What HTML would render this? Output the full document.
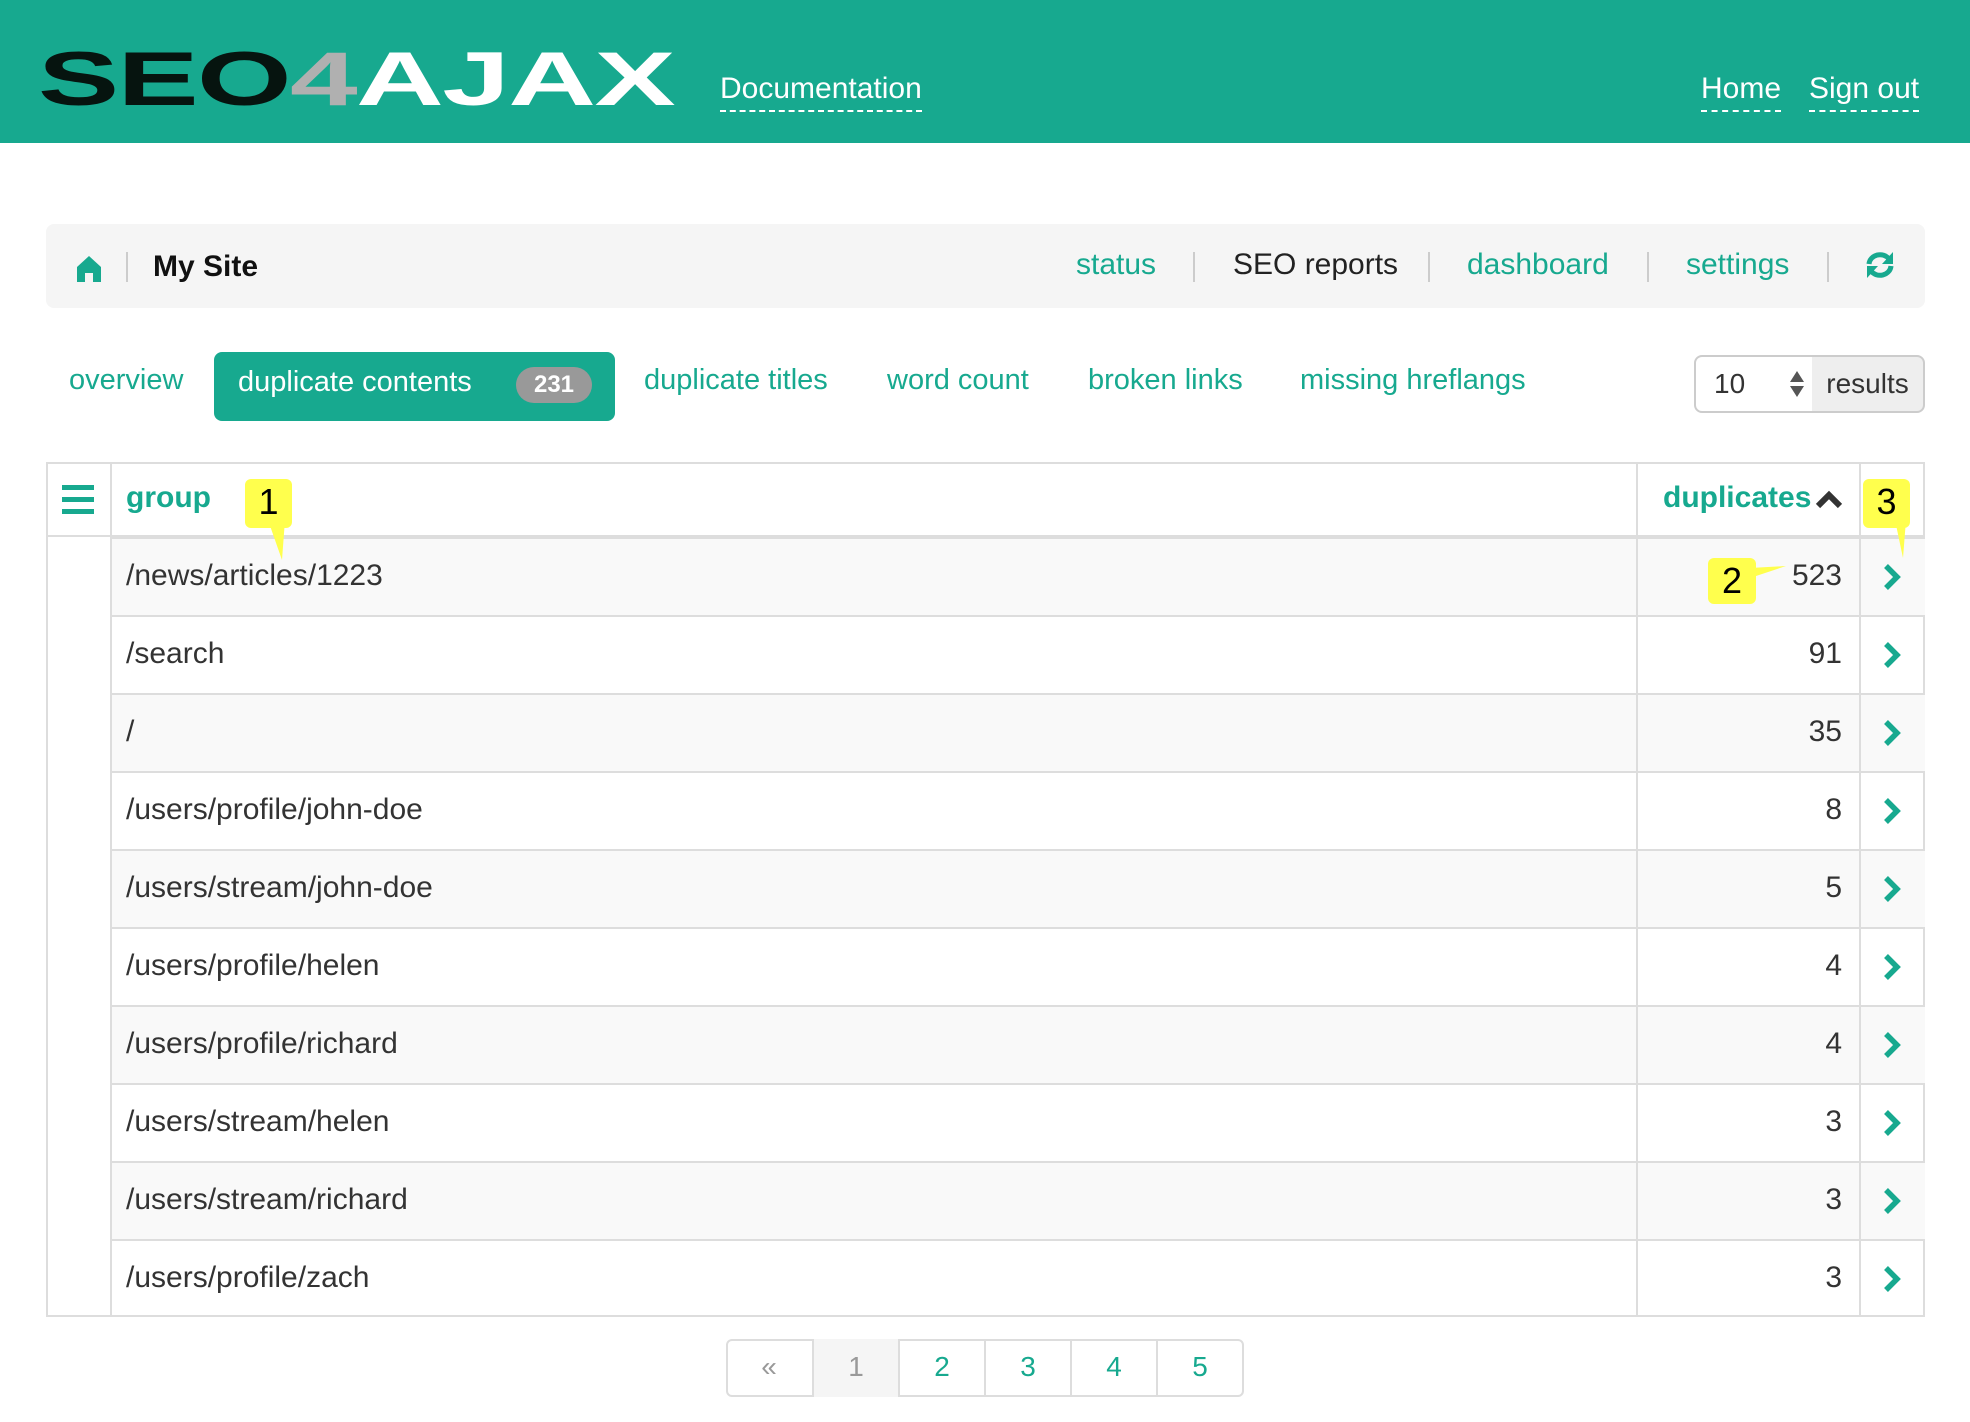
<!DOCTYPE html>
<html><head><meta charset="utf-8">
<style>
*{box-sizing:border-box;margin:0;padding:0}
body{width:1970px;height:1422px;background:#fff;font-family:"Liberation Sans",sans-serif;color:#333;position:relative;overflow:hidden}
.a{position:absolute;white-space:nowrap}
.teal{color:#17a98f}
.hdr{position:absolute;left:0;top:0;width:1970px;height:143px;background:#17a98f}
.lnk{color:#fff;font-size:30px;border-bottom:2px dashed #fff;padding-bottom:4px}
.crumb{position:absolute;left:46px;top:224px;width:1879px;height:84px;background:#f5f5f5;border-radius:8px}
.sep{position:absolute;top:252px;width:2px;height:30px;background:#ccc}
.tab{font-size:29px;color:#17a98f;top:364px}
.row{position:absolute;left:110px;width:1815px;height:78px;border-top:2px solid #ddd}
.cell{position:absolute;font-size:30px;top:20px}
.chev{position:absolute;left:1881px}
.pg{position:absolute;top:1339px;height:58px;width:86px;border-left:2px solid #ddd;font-size:28px;text-align:center;line-height:56px;color:#17a98f}
.call{position:absolute;background:#ffff4d;border-radius:6px;font-size:36px;color:#000;text-align:center;line-height:46px}
</style></head><body>
<div class="hdr"></div>
<div class="a" style="left:38px;top:44px;font-size:76px;font-weight:bold;line-height:72px;transform:scaleX(1.6);transform-origin:left top;letter-spacing:-1px"><span style="color:#06140f">SEO</span><span style="color:#b0b0b0">4</span><span style="color:#fff">AJAX</span></div>
<div class="a lnk" style="left:720px;top:72px">Documentation</div>
<div class="a lnk" style="left:1701px;top:72px">Home</div>
<div class="a lnk" style="left:1809px;top:72px">Sign out</div>

<div class="crumb"></div>
<svg class="a" style="left:76px;top:255px" width="26" height="28" viewBox="0 0 26 28"><path d="M13 1 L25 12 V27 H17 V18 H9 V27 H1 V12 Z" fill="#17a98f"/></svg>
<div class="sep" style="left:126px"></div>
<div class="a" style="left:153px;top:250px;font-size:30px;font-weight:bold;color:#111">My Site</div>
<div class="a teal" style="left:1076px;top:248px;font-size:30px">status</div>
<div class="sep" style="left:1193px"></div>
<div class="a" style="left:1233px;top:248px;font-size:30px;color:#222">SEO reports</div>
<div class="sep" style="left:1428px"></div>
<div class="a teal" style="left:1467px;top:248px;font-size:30px">dashboard</div>
<div class="sep" style="left:1647px"></div>
<div class="a teal" style="left:1686px;top:248px;font-size:30px">settings</div>
<div class="sep" style="left:1827px"></div>
<svg class="a" style="left:1864px;top:251px" width="32" height="28" viewBox="0 0 32 28"><path d="M5 13 A11 10 0 0 1 25 8" stroke="#17a98f" stroke-width="5" fill="none"/><path d="M29 1 V13 H18 Z" fill="#17a98f"/><path d="M27 15 A11 10 0 0 1 7 20" stroke="#17a98f" stroke-width="5" fill="none"/><path d="M3 27 V15 H14 Z" fill="#17a98f"/></svg>

<div class="a tab" style="left:69px">overview</div>
<div class="a" style="left:214px;top:352px;width:401px;height:69px;background:#17a98f;border-radius:8px"></div>
<div class="a" style="left:238px;top:366px;font-size:29px;color:#fff">duplicate contents</div>
<div class="a" style="left:516px;top:367px;width:76px;height:36px;background:#999;border-radius:18px;color:#fff;font-weight:bold;font-size:24px;text-align:center;line-height:36px">231</div>
<div class="a tab" style="left:644px">duplicate titles</div>
<div class="a tab" style="left:887px">word count</div>
<div class="a tab" style="left:1088px">broken links</div>
<div class="a tab" style="left:1300px">missing hreflangs</div>
<div class="a" style="left:1694px;top:355px;width:120px;height:58px;border:2px solid #ccc;border-radius:8px 0 0 8px;background:#fff"></div>
<div class="a" style="left:1714px;top:368px;font-size:28px">10</div>
<svg class="a" style="left:1790px;top:371px" width="14" height="26"><path d="M7 0 L14 11 H0Z M7 26 L14 15 H0Z" fill="#555"/></svg>
<div class="a" style="left:1812px;top:355px;width:113px;height:58px;border:2px solid #ccc;border-left:none;border-radius:0 8px 8px 0;background:#eee;font-size:28px;text-align:center;line-height:54px">results</div>

<div class="a" style="left:46px;top:462px;width:1879px;height:855px;border:2px solid #ddd"></div>
<div class="a" style="left:46px;top:535px;width:1879px;height:2px;background:#ddd"></div>
<svg class="a" style="left:62px;top:485px" width="32" height="30"><rect y="0" width="32" height="5" fill="#17a98f"/><rect y="12" width="32" height="5" fill="#17a98f"/><rect y="24" width="32" height="5" fill="#17a98f"/></svg>
<div class="a teal" style="left:126px;top:481px;font-size:30px;font-weight:bold">group</div>
<div class="a teal" style="left:1663px;top:481px;font-size:30px;font-weight:bold">duplicates</div>
<svg class="a" style="left:1815px;top:489px" width="28" height="20"><path d="M3 17 L14 6 L25 17" stroke="#333" stroke-width="6" fill="none"/></svg>

<div id="rows"></div>
<script>
var d=[["/news/articles/1223",523],["/search",91],["/",35],["/users/profile/john-doe",8],["/users/stream/john-doe",5],["/users/profile/helen",4],["/users/profile/richard",4],["/users/stream/helen",3],["/users/stream/richard",3],["/users/profile/zach",3]];
var h="";
d.forEach(function(r,i){var t=537+i*78;
h+='<div class="row" style="top:'+t+'px;'+(i%2==0?'background:#f9f9f9':'')+'"><div class="cell" style="left:16px">'+r[0]+'</div><div class="cell" style="right:83px;text-align:right">'+r[1]+'</div></div>';
h+='<svg class="chev" style="top:'+(t+26)+'px" width="22" height="28"><path d="M5 3 L16 14 L5 25" stroke="#17a98f" stroke-width="5.5" fill="none"/></svg>';
});
document.getElementById("rows").outerHTML=h;
</script>
<div class="a" style="left:1636px;top:462px;width:2px;height:855px;background:#ddd"></div>
<div class="a" style="left:1859px;top:462px;width:2px;height:855px;background:#ddd"></div>
<div class="a" style="left:110px;top:462px;width:2px;height:855px;background:#ddd"></div>

<div class="a" style="left:726px;top:1339px;width:518px;height:58px;border:2px solid #ddd;border-radius:6px"></div>
<div class="pg" style="left:726px;border-left:none;color:#999">«</div>
<div class="pg" style="left:812px;background:#f5f5f5;color:#999">1</div>
<div class="pg" style="left:898px">2</div>
<div class="pg" style="left:984px">3</div>
<div class="pg" style="left:1070px">4</div>
<div class="pg" style="left:1156px">5</div>

<svg class="a" style="left:0;top:0" width="1970" height="1422"><path d="M268 520 L282 560 L285 520Z" fill="#ffff4d"/><path d="M1895 520 L1903 558 L1906 520Z" fill="#ffff4d"/><path d="M1750 568 L1786 566 L1750 578Z" fill="#ffff4d"/></svg>
<div class="call" style="left:245px;top:479px;width:47px;height:49px">1</div>
<div class="call" style="left:1863px;top:479px;width:47px;height:49px">3</div>
<div class="call" style="left:1708px;top:558px;width:48px;height:46px">2</div>
</body></html>
